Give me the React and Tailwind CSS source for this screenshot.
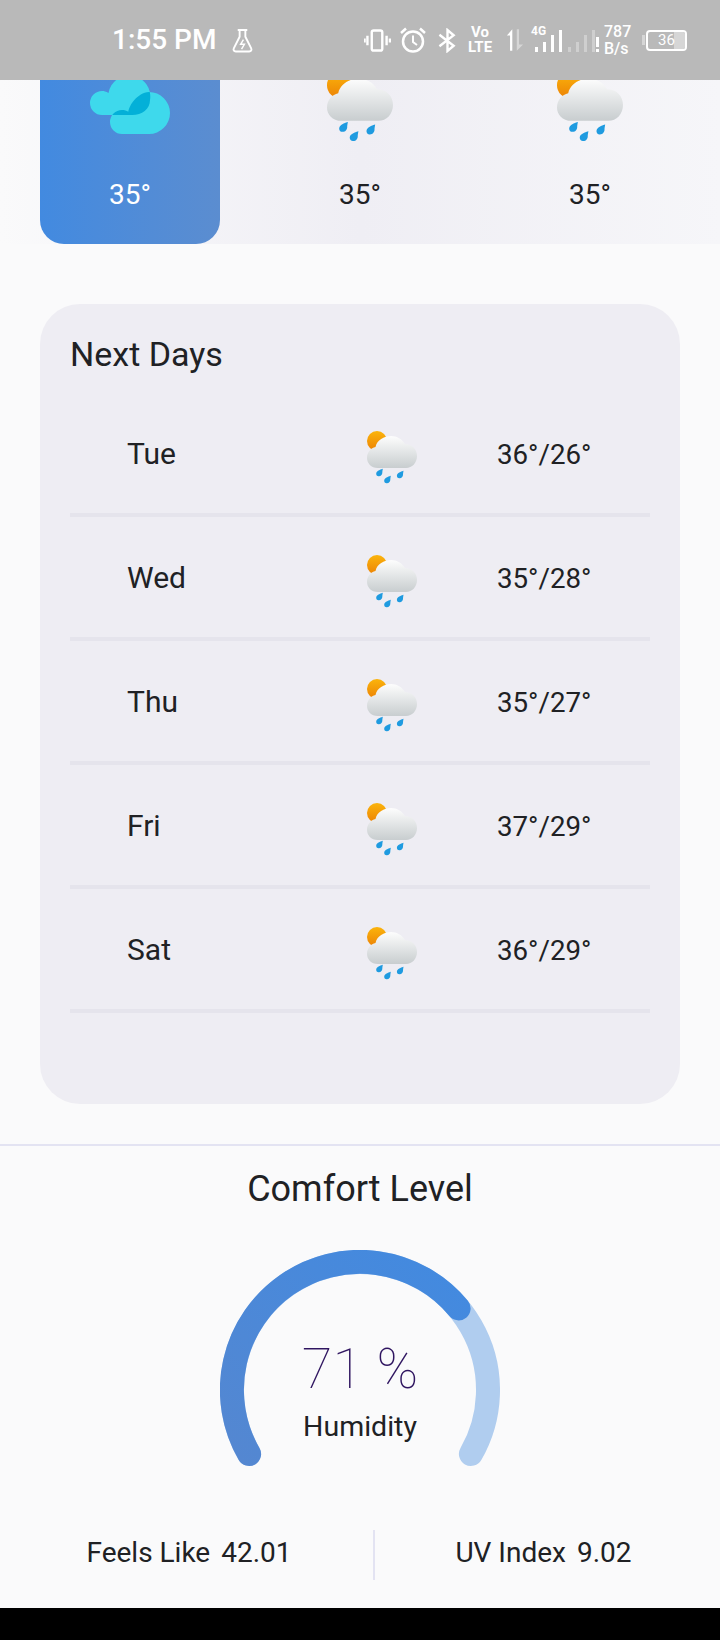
import React from "react";

const FONT = { fontFamily: "Roboto, sans-serif" };

const days = [
  { day: "Tue", temp: "36°/26°" },
  { day: "Wed", temp: "35°/28°" },
  { day: "Thu", temp: "35°/27°" },
  { day: "Fri", temp: "37°/29°" },
  { day: "Sat", temp: "36°/29°" },
];

const DROP = "M3.500 -4.500 C3.500 -4.500 -0.500 -3.500 -2.300 -1.500 C-3.700 0 -3.200 2.800 -0.800 3 C1.800 3.200 3 1 3 -0.500 C3 -2 3.500 -4.500 3.500 -4.500 Z";

// sun behind a cloud with three drops
function RainIcon({ id, className }) {
  return (
    <svg viewBox="0 0 50 53" className={className}>
      <defs>
        <linearGradient id={`sun-${id}`} x1="0" y1="0" x2="0" y2="1">
          <stop offset="0" stopColor="#fbb40c" />
          <stop offset="1" stopColor="#ec8204" />
        </linearGradient>
        <linearGradient id={`cloud-${id}`} x1="0" y1="0" x2="0" y2="1">
          <stop offset="0" stopColor="#fdfdfd" />
          <stop offset="1" stopColor="#c8cdcf" />
        </linearGradient>
      </defs>
      <circle cx="10" cy="10" r="10" fill={`url(#sun-${id})`} />
      <path
        d="M11 37 C4 37 0 32 0 27 C0 21 4 17 8.500 16 C10 9 17 5 24 5 C30 5 35 8 38 13 C45 13 50 18 50 25 C50 32 45 37 39 37 Z"
        fill={`url(#cloud-${id})`}
      />
      <path d={DROP} transform="translate(12.300 42.300)" fill="#1f9be0" />
      <path d={DROP} transform="translate(20.300 49.300)" fill="#1f9be0" />
      <path d={DROP} transform="translate(33 44.300)" fill="#1f9be0" />
    </svg>
  );
}

function CloudIcon() {
  const back = "M12 36 A12 12 0 0 1 12 12 C14 12 16 12.500 18.500 14 A21 21 0 0 1 60 21 C60 30 52 36 42 36 Z";
  const front = "M32 55 A12 12 0 0 1 32 31 C34.500 31 36.500 31.500 38.300 32.700 C39.500 26 47 14 59 13 A21 21 0 0 1 59 55 Z";
  return (
    <svg viewBox="0 0 80 55" className="w-[80px] h-[55px] mt-[-1px]">
      <defs>
        <clipPath id="front-cloud">
          <path d={front} />
        </clipPath>
      </defs>
      <path d={back} fill="#3ed9ec" />
      <path d={front} fill="#3ed9ec" />
      <path d={back} fill="#03b0d8" clipPath="url(#front-cloud)" />
    </svg>
  );
}

function StatusBar() {
  return (
    <div className="h-20 shrink-0 bg-[#b9b9b9] flex items-center text-white">
      <div className="flex items-center pl-[112px]">
        <span className="text-[28px] font-medium leading-none">1:55 PM</span>
        <svg viewBox="0 0 22 26" className="w-[21px] h-[25px] ml-[16px]" fill="none" stroke="white" strokeWidth="2">
          <path d="M6 2 H16 M8 2 V9 L2 21 C1 23 2 24.500 4 24.500 H18 C20 24.500 21 23 20 21 L14 9 V2" />
          <path d="M12 12 L9 17 H13 L10 22" strokeWidth="1.500" />
        </svg>
      </div>
      <div className="ml-auto flex items-center pr-[33px] h-full">
        <svg viewBox="0 0 28 24" className="w-[27px] h-[23px]" fill="none" stroke="white" strokeWidth="2.500">
          <rect x="8" y="1.500" width="11" height="21" rx="2" />
          <path d="M3.500 7 V17 M23.500 7 V17" />
          <path d="M0.500 10 V14 M27 10 V14" />
        </svg>
        <svg viewBox="0 0 28 26" className="w-[28px] h-[26px] ml-[8px]" fill="none" stroke="white" strokeWidth="2.500">
          <circle cx="14" cy="14.500" r="10" />
          <path d="M14 8.500 V15 L18 18" strokeWidth="2" />
          <path d="M2 6 L7 1.500 M26 6 L21 1.500" />
        </svg>
        <svg viewBox="0 0 20 26" className="w-[19px] h-[25px] ml-[11px]" fill="none" stroke="white" strokeWidth="2.500">
          <path d="M1.500 7 L16.500 18.500 L10 24 V2 L16.500 7.500 L1.500 19" />
        </svg>
        <div className="flex flex-col items-center ml-[10px] text-[15px] font-bold leading-[15px] w-[26px]">
          <span>Vo</span>
          <span>LTE</span>
        </div>
        <svg viewBox="0 0 20 26" className="w-[18px] h-[26px] ml-[13px]">
          <path d="M1 8 L7 1 V25 H4.500 V8 Z" fill="white" />
          <path d="M12 1 H14.500 V18 H19 L12 25 Z" fill="#d6d6d6" />
        </svg>
        <div className="relative w-[34px] h-[26px] ml-[7px] mb-[2px]">
          <span className="absolute left-0 top-[-1px] text-[12px] font-bold leading-[12px]">4G</span>
          <div className="absolute left-[4px] bottom-0 flex items-end gap-[5px]">
            <div className="w-[3px] h-[5px] bg-white" />
            <div className="w-[3px] h-[10px] bg-white" />
            <div className="w-[3px] h-[17px] bg-white" />
            <div className="w-[3px] h-[22px] bg-white" />
          </div>
        </div>
        <div className="flex items-end gap-[5px] h-[22px] ml-[3px] mt-[2px]">
          <div className="w-[3px] h-[5px] bg-[#cfcfcf]" />
          <div className="w-[3px] h-[10px] bg-[#cfcfcf]" />
          <div className="w-[3px] h-[17px] bg-[#cfcfcf]" />
          <div className="w-[3px] h-[22px] bg-[#cfcfcf]" />
        </div>
        <div className="flex flex-col items-center ml-[1px] mt-[9px] w-[3px]">
          <div className="w-[3px] h-[10px] bg-white" />
          <div className="w-[3px] h-[3px] bg-white mt-[2px]" />
        </div>
        <div className="flex flex-col ml-[5px] text-[16px] leading-[17px] font-medium w-[28px]">
          <span>787</span>
          <span>B/s</span>
        </div>
        <div className="w-[3px] h-[10px] bg-[#d6d6d6] ml-[10px]" />
        <div className="relative w-[41px] h-[21px] border-2 border-white rounded-[4px] ml-[1px] overflow-hidden flex items-center justify-center">
          <div className="absolute right-0 inset-y-0 w-[11px] bg-[#d6d6d6]" />
          <span className="relative text-[15px] leading-none">36</span>
        </div>
      </div>
    </div>
  );
}

function HourCol({ id }) {
  return (
    <div className="w-[180px] shrink-0 flex flex-col items-center text-[#202124]">
      <div className="h-[63px] overflow-hidden w-full flex justify-center">
        <RainIcon id={id} className="w-[66px] h-[70px] shrink-0 mt-[-8px]" />
      </div>
      <span className="text-[28px] leading-[34px] mt-[35px]">35°</span>
    </div>
  );
}

function HourStrip() {
  return (
    <div className="h-[164px] shrink-0 flex gap-[50px] pl-[40px] overflow-hidden bg-gradient-to-r from-[#fafafb] via-[#efeef4] to-[#f6f6f9]">
      <div className="w-[180px] h-full shrink-0 rounded-b-[24px] bg-gradient-to-r from-[#428ae0] to-[#5b8dd0] flex flex-col items-center text-white">
        <div className="h-[63px] overflow-hidden">
          <CloudIcon />
        </div>
        <span className="text-[28px] leading-[34px] mt-[35px]">35°</span>
      </div>
      <HourCol id="h1" />
      <HourCol id="h2" />
    </div>
  );
}

function Gauge() {
  return (
    <div className="relative w-[280px] h-[220px] mx-auto mt-[39px]">
      <svg viewBox="0 0 280 220" className="w-full h-full">
        <defs>
          <linearGradient id="gauge" x1="0" y1="1" x2="1" y2="0">
            <stop offset="0" stopColor="#5487d1" />
            <stop offset="1" stopColor="#428ae0" />
          </linearGradient>
        </defs>
        <path d="M29.100 204 A128 128 0 1 1 250.900 204" fill="none" stroke="#b0cdef" strokeWidth="24" strokeLinecap="round" />
        <path d="M29.100 204 A128 128 0 0 1 238.600 58.400" fill="none" stroke="url(#gauge)" strokeWidth="24" strokeLinecap="round" />
      </svg>
      <div className="absolute inset-x-0 top-[89px] flex flex-col items-center">
        <span className="text-[56px] font-thin leading-[60px] text-[#2f1560]">71 %</span>
        <span className="text-[28.5px] leading-[34px] text-[#202124] mt-[11px]">Humidity</span>
      </div>
    </div>
  );
}

export default function App() {
  return (
    <div className="w-[720px] h-[1640px] flex flex-col bg-[#fafafb] overflow-hidden" style={FONT}>
      <StatusBar />
      <HourStrip />

      {/* Next days */}
      <div className="mx-[40px] mt-[60px] h-[800px] shrink-0 rounded-[40px] bg-[#eeedf3] px-[30px] pt-[31px]">
        <h2 className="text-[34px] leading-[38px] text-[#202124]">Next Days</h2>
        <div className="mt-[20px]">
          {days.map((d, i) => (
            <div key={d.day} className="h-[124px] border-b-4 border-[#e5e4ec] flex items-center pl-[57px] text-[#202124]">
              <span className="text-[30px] w-[240px] shrink-0">{d.day}</span>
              <RainIcon id={`d${i}`} className="w-[50px] h-[53px] mt-[8px] shrink-0" />
              <span className="text-[27.7px] ml-[80px] mt-[4px]">{d.temp}</span>
            </div>
          ))}
        </div>
      </div>

      {/* Comfort level */}
      <div className="mt-[40px] border-t-2 border-[#e3e3f2] flex-1 flex flex-col">
        <h2 className="text-[36px] leading-[44px] text-center text-[#202124] mt-[21px]">Comfort Level</h2>
        <Gauge />
        <div className="flex items-center h-[50px] mt-[60px] text-[28px] text-[#202124]">
          <div className="w-[373px] flex justify-center gap-[11px] pl-[5px] mb-[4px]">
            <span>Feels Like</span>
            <span>42.01</span>
          </div>
          <div className="w-[2px] h-[50px] bg-[#e3e3f2]" />
          <div className="flex-1 flex justify-center gap-[11px] pr-[8px] mb-[4px]">
            <span>UV Index</span>
            <span>9.02</span>
          </div>
        </div>
        <div className="mt-auto h-[32px] bg-black" />
      </div>
    </div>
  );
}
